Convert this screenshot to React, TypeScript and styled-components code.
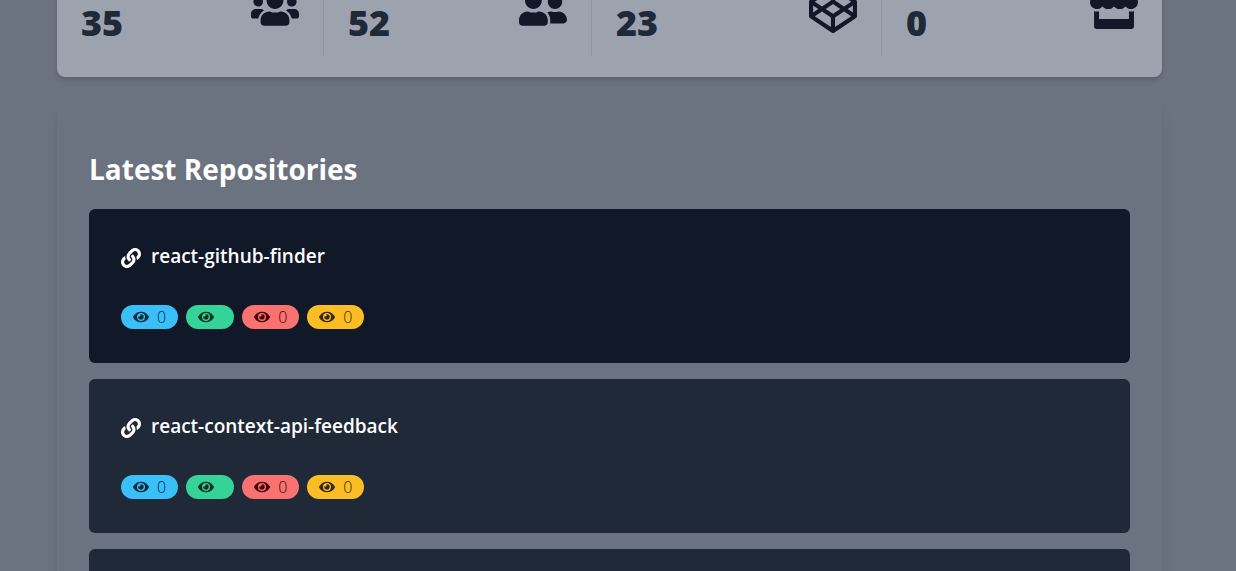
import React from 'react';
import styled, { createGlobalStyle } from 'styled-components';
import { FaUsers, FaUserFriends, FaCodepen, FaStore, FaEye, FaLink } from 'react-icons/fa';

const GlobalStyle = createGlobalStyle`
  *, *::before, *::after { box-sizing: border-box; }
  body {
    margin: 0;
    background: #6b7280;
    color: #1f2937;
    font-family: 'Open Sans', 'Noto Sans', sans-serif;
    font-size: 16px;
    line-height: 24px;
  }
`;

const Viewport = styled.div`
  height: 100vh;
  overflow: hidden;
`;

const Page = styled.main`
  display: flex;
  flex-direction: column;
  gap: 24px;
  margin-top: -58px;
  padding: 0 74px 0 57px;
`;

const Stats = styled.section`
  display: grid;
  grid-template-columns: 267fr 268fr 290fr 280fr;
  padding: 20px 0 21px;
  border-radius: 8px;
  background: #9ca3af;
  box-shadow: 0 4px 6px -1px rgba(0, 0, 0, 0.1), 0 2px 4px -1px rgba(0, 0, 0, 0.1);
`;

const Stat = styled.div`
  display: flex;
  align-items: center;
  justify-content: space-between;
  height: 94px;
  padding: 16px 24px;
  border-right: 1px solid rgba(31, 41, 55, 0.1);

  &:last-child { border-right: 0; }

  svg { width: 48px; height: 48px; color: #111827; }
`;

const StatValue = styled.span`
  align-self: flex-end;
  font-size: 36px;
  font-weight: 800;
  line-height: 34px;
`;

const Panel = styled.section`
  display: flex;
  flex-direction: column;
  gap: 8px;
  padding: 32px;
  border-radius: 8px;
  box-shadow: 0 10px 15px -3px rgba(0, 0, 0, 0.1), 0 4px 6px -4px rgba(0, 0, 0, 0.1);
`;

const PanelTitle = styled.h2`
  margin: 18px 0 14px;
  color: #ffffff;
  font-size: 28px;
  font-weight: 700;
  line-height: 36px;
`;

const RepoList = styled.div`
  display: flex;
  flex-direction: column;
  gap: 16px;
`;

const RepoCard = styled.article<{ $background: string }>`
  display: flex;
  flex-direction: column;
  align-items: flex-start;
  gap: 34px;
  min-height: 154px;
  padding: 32px;
  border-radius: 6px;
  background: ${(p) => p.$background};
`;

const RepoLink = styled.a`
  display: flex;
  align-items: center;
  gap: 10px;
  color: #ffffff;
  font-size: 19px;
  font-weight: 600;
  line-height: 30px;
  text-decoration: none;

  svg { width: 20px; height: 20px; margin-top: 4px; }
`;

const Badges = styled.div`
  display: flex;
  gap: 8px;
`;

const Badge = styled.span<{ $background: string; $color: string }>`
  display: inline-flex;
  align-items: center;
  gap: 8px;
  height: 24px;
  padding: 0 12px;
  border-radius: 12px;
  background: ${(p) => p.$background};
  color: ${(p) => p.$color};
  font-weight: 300;

  svg { width: 16px; height: 16px; }
`;

const stats = [
  { value: 35, Icon: FaUsers },
  { value: 52, Icon: FaUserFriends },
  { value: 23, Icon: FaCodepen },
  { value: 0, Icon: FaStore },
];

const badges = [
  { background: '#3abff8', color: '#002b3d', count: '0' },
  { background: '#36d399', color: '#003320', count: '' },
  { background: '#f87272', color: '#470000', count: '0' },
  { background: '#fbbd23', color: '#382800', count: '0' },
];

const repos = [
  { name: 'react-github-finder', background: '#111827' },
  { name: 'react-context-api-feedback', background: '#1f2937' },
];

export default function App() {
  return (
    <Viewport>
      <GlobalStyle />
      <Page>
        <Stats>
          {stats.map(({ value, Icon }) => (
            <Stat key={value}>
              <StatValue>{value}</StatValue>
              <Icon aria-hidden />
            </Stat>
          ))}
        </Stats>
        <Panel>
          <PanelTitle>Latest Repositories</PanelTitle>
          <RepoList>
            {repos.map((repo) => (
              <RepoCard key={repo.name} $background={repo.background}>
                <RepoLink href="#">
                  <FaLink aria-hidden />
                  {repo.name}
                </RepoLink>
                <Badges>
                  {badges.map((badge) => (
                    <Badge key={badge.background} $background={badge.background} $color={badge.color}>
                      <FaEye aria-hidden />
                      <span>{badge.count}</span>
                    </Badge>
                  ))}
                </Badges>
              </RepoCard>
            ))}
            <RepoCard $background="#1f2937" />
          </RepoList>
        </Panel>
      </Page>
    </Viewport>
  );
}
